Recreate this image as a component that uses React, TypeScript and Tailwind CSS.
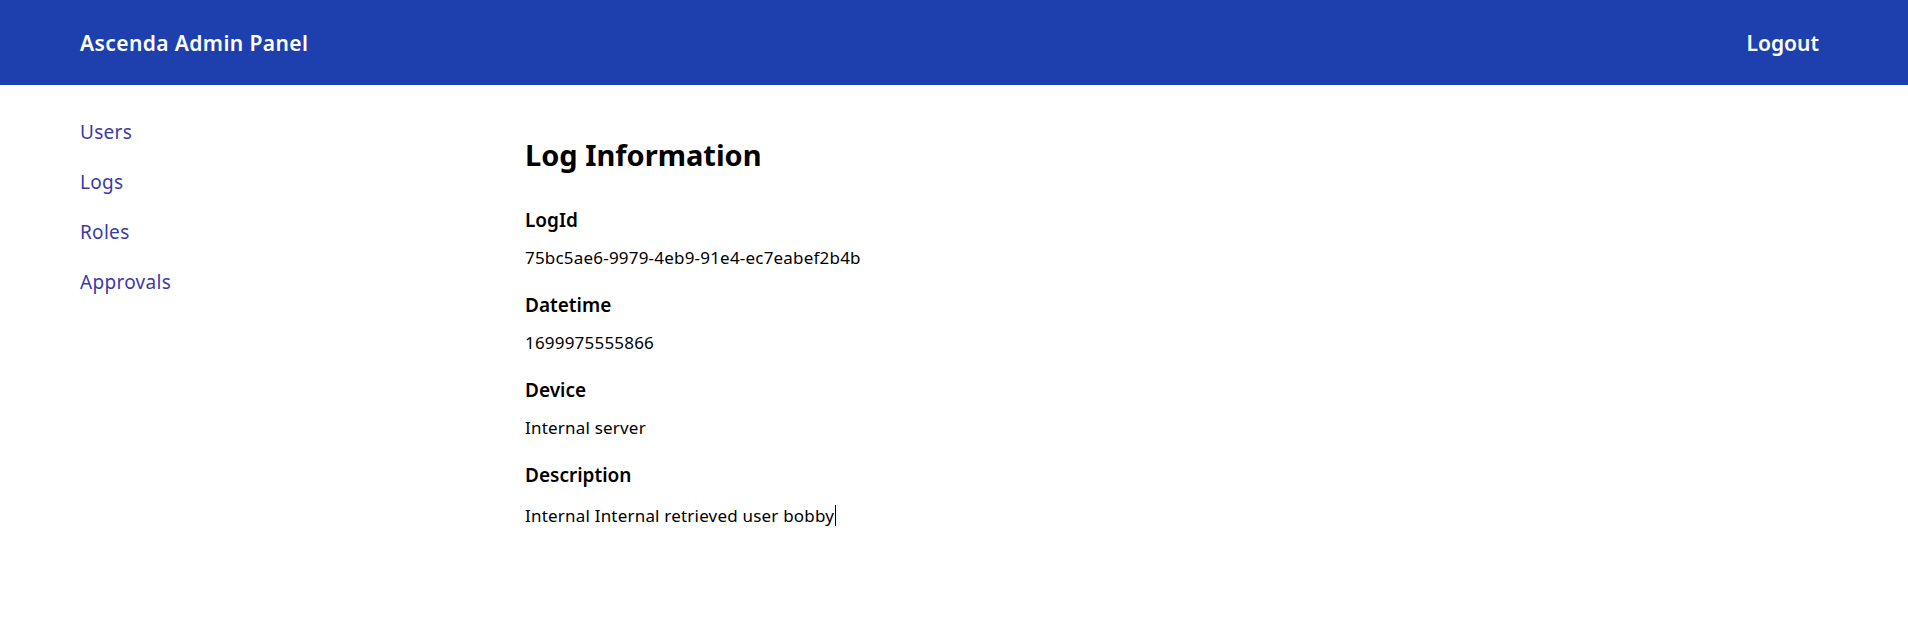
const NAV = ['Users', 'Logs', 'Roles', 'Approvals']

const FIELDS: { label: string; value: string }[] = [
  { label: 'LogId', value: '75bc5ae6-9979-4eb9-91e4-ec7eabef2b4b' },
  { label: 'Datetime', value: '1699975555866' },
  { label: 'Device', value: 'Internal server' },
  { label: 'Description', value: 'Internal Internal retrieved user bobby' },
]

export default function App() {
  return (
    <div className="min-h-screen bg-white font-['Noto_Sans',sans-serif] text-black">
      {/* Top bar */}
      <header className="flex h-[85px] items-center justify-between bg-[#1e40af] pl-20 pr-[89px] text-white">
        <span className="text-[21px] leading-[28px] font-semibold tracking-[0.4px]">Ascenda Admin Panel</span>
        <button className="text-[21px] leading-[28px] font-semibold">Logout</button>
      </header>

      <div className="flex">
        {/* Sidebar */}
        <nav className="flex w-[525px] shrink-0 flex-col gap-[22px] pl-20 pt-[33px]">
          {NAV.map((item) => (
            <a key={item} href="#" className="text-[19px] leading-[28px] tracking-[0.3px] text-[#3b3aa8]">
              {item}
            </a>
          ))}
        </nav>

        {/* Detail */}
        <main className="flex-1 pt-[52px]">
          <h1 className="mb-[33px] text-[29px] leading-[36px] font-bold">Log Information</h1>
          <div className="flex flex-col gap-[21px]">
            {FIELDS.map((f, i) => (
              <div key={f.label} className="flex flex-col gap-3">
                <h2 className="text-[19px] leading-[28px] font-semibold">{f.label}</h2>
                <p className="text-[17px] leading-[24px] tracking-[0.2px]">
                  {f.value}
                  {i === FIELDS.length - 1 && (
                    <span className="ml-px inline-block h-[21px] w-px translate-y-[4px] bg-black" />
                  )}
                </p>
              </div>
            ))}
          </div>
        </main>
      </div>
    </div>
  )
}
